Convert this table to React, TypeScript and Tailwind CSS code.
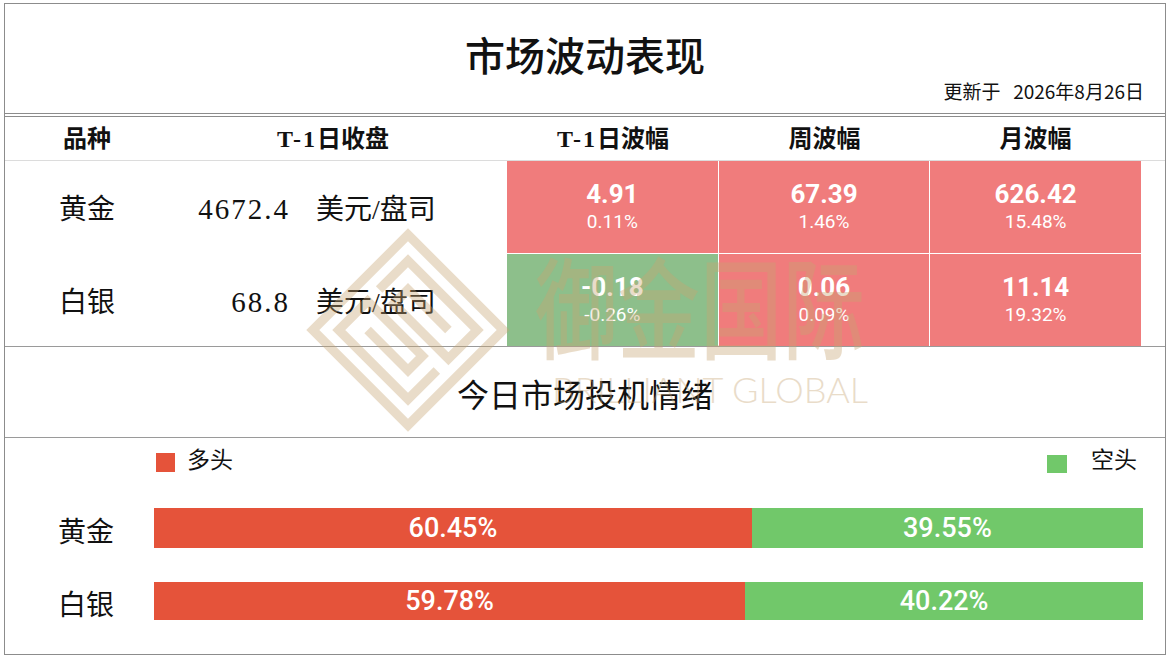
import React from 'react';

type Cell = { v: string; p: string; up: boolean };

const ROWS: { name: string; close: string; cells: Cell[] }[] = [
  {
    name: '黄金',
    close: '4672.4',
    cells: [
      { v: '4.91', p: '0.11%', up: true },
      { v: '67.39', p: '1.46%', up: true },
      { v: '626.42', p: '15.48%', up: true },
    ],
  },
  {
    name: '白银',
    close: '68.8',
    cells: [
      { v: '-0.18', p: '-0.26%', up: false },
      { v: '0.06', p: '0.09%', up: true },
      { v: '11.14', p: '19.32%', up: true },
    ],
  },
];

const SENTIMENT = [
  { name: '黄金', long: 60.45, short: 39.55, h: 'h-[40px]' },
  { name: '白银', long: 59.78, short: 40.22, h: 'h-[38px]' },
];

const Watermark = () => (
  <div className="pointer-events-none absolute inset-0">
    {/* logo */}
    <svg className="absolute left-[306px] top-[228px] w-[204px] h-[204px] opacity-[0.38]" viewBox="0 0 200 200">
      <g transform="rotate(45 100 100)" fill="none" stroke="#c8a572" strokeWidth="9" strokeLinejoin="miter">
        <rect x="34" y="34" width="132" height="132" />
        <path d="M52 92 V52 H148 V92 H72 V72 H128" />
        <path d="M148 108 V148 H52 V108 H128 V128 H72" />
      </g>
    </svg>
    {/* brand text */}
    <div className="absolute left-[520px] top-[233px] w-[360px] flex justify-center">
      <span className="font-['Noto_Sans_CJK_SC',sans-serif] font-medium text-[110px] leading-[140px] text-[#c8a572] opacity-[0.38] scale-x-75 whitespace-nowrap">
        御金国际
      </span>
    </div>
    <div className="absolute left-[530px] top-[366px] w-[360px] flex justify-center">
      <span className="font-['Lato',sans-serif] font-light text-[36px] leading-[46px] text-[#c8a572] opacity-[0.38] whitespace-nowrap">
        BRILLIANT GLOBAL
      </span>
    </div>
  </div>
);

export default function App() {
  return (
    <div className="relative w-[1170px] h-[659px] bg-white pt-[3px] pl-[4px] font-['Liberation_Serif','Noto_Sans_CJK_SC',serif] text-[#111]">
      <div className="w-[1162px] h-[652px] border border-[#8c8c8c] flex flex-col">
        {/* Title */}
        <div className="h-[109px] flex flex-col items-center">
          <h1 className="pt-[32px] text-[40px] leading-[44px] font-medium">市场波动表现</h1>
          <p className="self-end pr-[21px] mt-[1px] text-[19px] leading-[20px] font-['Noto_Sans_CJK_SC',sans-serif]">
            更新于&nbsp;&nbsp;&nbsp;2026年8月26日
          </p>
        </div>
        <div className="h-px bg-[#8c8c8c]" />
        <div className="h-[2px]" />
        <div className="h-px bg-[#8c8c8c]" />

        {/* Header */}
        <div className="h-[44px] flex items-center border-b border-[#dcdcdc] text-[24px] font-bold">
          <div className="w-[164px] text-center">品种</div>
          <div className="w-[338px] text-center pr-[10px]">
            <span className="tracking-[2px]">T-1</span>日收盘
          </div>
          <div className="w-[212px] text-center">
            <span className="tracking-[2px]">T-1</span>日波幅
          </div>
          <div className="w-[211px] text-center">周波幅</div>
          <div className="w-[211px] text-center">月波幅</div>
        </div>

        {/* Data rows */}
        <div className="flex flex-col gap-px border-b border-[#9a9a9a]">
          {ROWS.map((r) => (
            <div key={r.name} className="h-[92px] flex items-center">
              <div className="w-[164px] text-center text-[28px] pt-[6px]">{r.name}</div>
              <div className="w-[338px] flex items-center pt-[6px]">
                <span className="w-[121px] text-right text-[29px] tracking-[2px]">{r.close}</span>
                <span className="ml-[26px] text-[28px]">美元/盘司</span>
              </div>
              <div className="grid grid-cols-3 gap-px w-[634px] h-full">
                {r.cells.map((c, i) => (
                  <div
                    key={i}
                    className={`flex flex-col items-center justify-center pb-[2px] text-white font-['Roboto',sans-serif] ${
                      c.up ? 'bg-[#f07c7c]' : 'bg-[#8dbf8b]'
                    }`}
                  >
                    <span className="text-[26px] leading-[30px] font-bold">{c.v}</span>
                    <span className="text-[19px] leading-[24px] mt-[1px]">{c.p}</span>
                  </div>
                ))}
              </div>
            </div>
          ))}
        </div>

        {/* Sentiment title */}
        <div className="h-[91px] flex items-center justify-center pt-[2px] border-b border-[#9a9a9a]">
          <h2 className="text-[32px] leading-[40px] font-['Noto_Sans_CJK_SC',sans-serif]">今日市场投机情绪</h2>
        </div>

        {/* Sentiment chart */}
        <div className="flex-1 flex flex-col">
          <div className="flex items-start justify-between pl-[151px] pr-[28px] pt-[8px] text-[23px] leading-[24px] font-['Noto_Sans_CJK_SC',sans-serif]">
            <div className="flex items-start">
              <span className="mt-[7px] w-[19px] h-[19px] bg-[#e5533a]" />
              <span className="ml-[12px]">多头</span>
            </div>
            <div className="flex items-start">
              <span className="mt-[9px] w-[20px] h-[18px] bg-[#71c86a]" />
              <span className="ml-[24px]">空头</span>
            </div>
          </div>
          <div className="mt-[35px] flex flex-col gap-[34px]">
            {SENTIMENT.map((s) => (
              <div key={s.name} className="flex items-center pl-[53px]">
                <span className="w-[96px] text-[28px] leading-[28px] pt-[4px] font-['Noto_Sans_CJK_SC',sans-serif]">{s.name}</span>
                <div className={`w-[989px] ${s.h} flex font-['Roboto',sans-serif] font-medium text-[27px] text-white`}>
                  <div className="bg-[#e5533a] flex items-center justify-center" style={{ width: `${s.long}%` }}>
                    {s.long.toFixed(2)}%
                  </div>
                  <div className="bg-[#71c86a] flex items-center justify-center" style={{ width: `${s.short}%` }}>
                    {s.short.toFixed(2)}%
                  </div>
                </div>
              </div>
            ))}
          </div>
        </div>
      </div>
      <Watermark />
    </div>
  );
}
